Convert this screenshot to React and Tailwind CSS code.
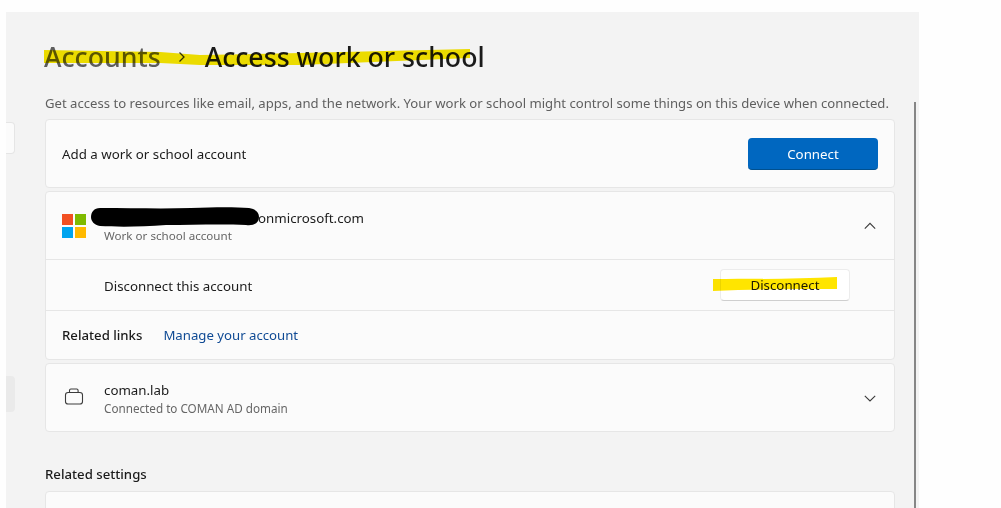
import React from "react";

const Chevron = ({ up }) => (
  <svg width="14" height="14" viewBox="0 0 14 14" fill="none" stroke="#3a3a3a" strokeWidth="1.1">
    <path d={up ? "M1.8 9.6 7 4.4l5.2 5.2" : "M1.8 4.8 7 10l5.2-5.2"} />
  </svg>
);

const Brief = () => (
  <svg width="20" height="20" viewBox="0 0 20 20" fill="none" stroke="#3c3c3c" strokeWidth="1.1">
    <rect x="1.5" y="4.5" width="17" height="11.5" rx="2.6" />
    <path d="M5.5 4.5V2.4c0-.8.6-1.4 1.4-1.4h5.8c.8 0 1.4.6 1.4 1.4v2.1" />
  </svg>
);

const MsLogo = () => (
  <div className="grid grid-cols-[11px_11px] grid-rows-[11px_11px] gap-[2px] w-6 shrink-0">
    <div className="bg-[#f25022]" />
    <div className="bg-[#7fba00]" />
    <div className="bg-[#00a4ef]" />
    <div className="bg-[#ffb900]" />
  </div>
);

export default function App() {
  return (
    <div
      className="w-[1001px] h-[508px] overflow-hidden bg-[#fefefe] pt-3 pl-[6px]"
      style={{ fontFamily: '"Noto Sans", sans-serif' }}
    >
      <div className="relative w-[913px] h-[496px] overflow-hidden bg-[#f3f3f3] pl-[39px] pr-[24px]">
        {/* scrollbar */}
        <div className="absolute left-[908px] top-[90px] bottom-0 w-[2px] bg-[#868686]" />

        {/* clipped left nav items */}
        <div className="absolute left-0 top-[110px] w-[9px] h-[32px] bg-[#fbfbfb] border border-l-0 border-[#e5e5e5] rounded-r" />
        <div className="absolute left-0 top-[364px] w-[9px] h-[36px] bg-[#eaeaea] rounded-r" />

        <h1 className="relative flex items-center pt-[28px] h-[62px] -ml-[1px] text-[26.7px] leading-[36px] font-medium whitespace-nowrap">
          <span className="text-[#5d5d5d]">Accounts</span>
          <svg className="ml-[16px] mr-[18px]" width="10" height="12" viewBox="0 0 10 12" fill="none" stroke="#333" strokeWidth="1.3">
            <path d="M2.5 1.5 7 6l-4.5 4.5" />
          </svg>
          <span className="text-[#1a1a1a]">Access work or school</span>
        </h1>

        {/* highlighter stroke over the title */}
        <svg className="absolute left-[38px] top-[36px] mix-blend-multiply" width="428" height="20" viewBox="0 0 428 20">
          <path d="M0 2 L116 4 L156 7 L256 5 L426 1 L426 10 L256 17 L156 17 L116 15 L0 15 Z" fill="#f7e600" />
        </svg>

        <p className="mt-[20px] h-[19px] text-[13.14px] leading-[19px] text-[#5f5f5f] whitespace-nowrap">
          Get access to resources like email, apps, and the network. Your work or school might control some things on this device when connected.
        </p>

        <div className="mt-[6px] flex flex-col gap-[3px]">
          {/* add account */}
          <div className="h-[69px] flex items-center justify-between bg-[#fbfbfb] border border-[#e6e6e6] rounded pl-4 pr-4">
            <span className="pt-[2px] text-[13.3px] text-[#1b1b1b]">Add a work or school account</span>
            <button className="w-[130px] h-8 pt-[3px] rounded bg-[#0067c0] border-b border-[#00508f] text-white text-[13.3px]">
              Connect
            </button>
          </div>

          {/* expanded account */}
          <div className="h-[169px] flex flex-col bg-[#fbfbfb] border border-[#e6e6e6] rounded">
            <div className="relative h-[68px] shrink-0 flex items-center pl-4 pr-[17px] border-b border-[#e6e6e6]">
              <MsLogo />
              <div className="ml-[18px] flex-1 pt-[2px]">
                <div className="pl-[154px] text-[13.3px] leading-[18px] text-[#1b1b1b] -mt-[1px]">onmicrosoft.com</div>
                <div className="text-[11.6px] leading-[16px] mt-[1px] text-[#666]">Work or school account</div>
              </div>
              <Chevron up />
              <svg className="absolute left-[45px] top-[15px]" width="168" height="20" viewBox="0 0 168 20" fill="#000">
                <path d="M9 1 C40 1 70 2 100 1 C125 0 145 0 158 1 C165 2 168 6 168 10 C168 16 163 19 155 18 C130 17 100 18 75 18 C50 20 25 20 9 19 C3 18 0 14 0 10 C0 5 3 1 9 1 Z" />
              </svg>
            </div>
            <div className="relative h-[51px] shrink-0 flex items-center justify-between pl-[58px] pr-[44px] border-b border-[#e6e6e6]">
              <span className="pt-[3px] text-[13.3px] text-[#1b1b1b]">Disconnect this account</span>
              <button className="w-[130px] h-[32px] pt-[1px] rounded bg-white border border-[#ececec] border-b-[#cfcfcf] text-[13.3px] text-[#1b1b1b]">
                Disconnect
              </button>
              <svg className="absolute left-[667px] top-[17px] mix-blend-multiply" width="125" height="15" viewBox="0 0 125 15">
                <path d="M0 2 C40 2 85 2 124 0 L124 12 C85 12 40 12 0 14 Z" fill="#ffe500" />
              </svg>
            </div>
            <div className="flex-1 flex items-center pl-4 pt-[2px] gap-[21px]">
              <span className="text-[13.2px] font-medium text-[#1b1b1b]">Related links</span>
              <span className="text-[13.2px] text-[#0f4a94]">Manage your account</span>
            </div>
          </div>

          {/* domain */}
          <div className="h-[69px] flex items-center bg-[#fbfbfb] border border-[#e6e6e6] rounded pl-[18px] pr-[17px]">
            <div className="w-5 shrink-0">
              <Brief />
            </div>
            <div className="ml-5 flex-1 pt-[2px]">
              <div className="text-[13.3px] leading-[18px] text-[#1b1b1b]">coman.lab</div>
              <div className="text-[11.7px] leading-[16px] mt-[1px] text-[#666]">Connected to COMAN AD domain</div>
            </div>
            <Chevron />
          </div>
        </div>

        <h2 className="mt-[32px] h-[20px] text-[13.2px] leading-[20px] font-medium text-[#1b1b1b]">Related settings</h2>
        <div className="mt-[7px] h-[40px] bg-[#fbfbfb] border border-[#e6e6e6] rounded" />
      </div>
    </div>
  );
}
